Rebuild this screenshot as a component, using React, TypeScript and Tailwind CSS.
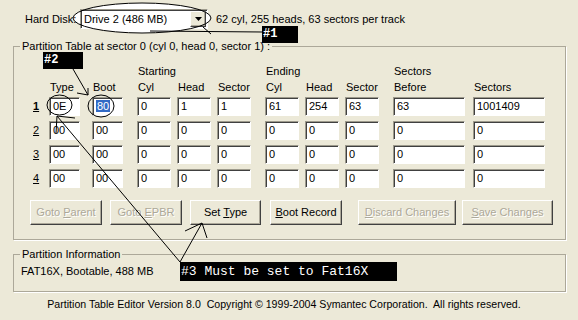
import React from 'react';

const rows = [
  ['0E', '80', '0', '1', '1', '61', '254', '63', '63', '1001409'],
  ['00', '00', '0', '0', '0', '0', '0', '0', '0', '0'],
  ['00', '00', '0', '0', '0', '0', '0', '0', '0', '0'],
  ['00', '00', '0', '0', '0', '0', '0', '0', '0', '0'],
];

const cols = [
  'w-[31px]',
  'ml-[12px] w-[31px]',
  'ml-[14px] w-[34px]',
  'ml-[6px] w-[34px]',
  'ml-[6px] w-[34px]',
  'ml-[14px] w-[34px]',
  'ml-[6px] w-[34px]',
  'ml-[6px] w-[34px]',
  'ml-[14px] w-[72px]',
  'ml-[8px] w-[72px]',
];

const groupTop = ['', '', 'Starting', '', '', 'Ending', '', '', 'Sectors', ''];
const groupSub = ['Type', 'Boot', 'Cyl', 'Head', 'Sector', 'Cyl', 'Head', 'Sector', 'Before', 'Sectors'];

const sunken =
  'border border-t-[#9d9a8c] border-l-[#9d9a8c] border-b-white border-r-white shadow-[inset_1px_1px_0_#404040]';
const raised =
  'border border-t-white border-l-white border-r-[#404040] border-b-[#404040] shadow-[inset_-1px_-1px_0_#ACA899]';

function Field({ value, selected, cls }: { value: string; selected?: boolean; cls: string }) {
  return (
    <div className={`${cls} ${sunken} h-[19px] bg-white pl-[3px] leading-[17px]`}>
      {selected ? <span className="bg-[#316AC5] px-[1px] text-white">{value}</span> : value}
    </div>
  );
}

function Btn({ children, w, disabled }: { children: React.ReactNode; w: string; disabled?: boolean }) {
  return (
    <div
      className={`${w} ${raised} flex h-[25px] items-center justify-center ${
        disabled ? 'text-[#ACA899] [text-shadow:1px_1px_0_#fff]' : 'text-black'
      }`}
    >
      <span className="whitespace-pre">{children}</span>
    </div>
  );
}

export default function App() {
  return (
    <div className="relative h-[320px] w-[578px] overflow-hidden bg-[#ECE9D8] font-['Liberation_Sans',Arial,sans-serif] text-[11px] text-black">
      {/* white oval behind the drive picker */}
      <svg className="absolute left-0 top-0" width="578" height="320">
        <ellipse cx="142" cy="18" rx="69" ry="15" fill="#fff" />
      </svg>

      <div className="relative">
        {/* hard disk row */}
        <div className="flex items-center pt-[9px]">
          <span className="ml-[25px] w-[55px]">Hard Disk:</span>
          <div className={`${sunken} flex h-[20px] w-[128px] items-center bg-white`}>
            <span className="flex-1 pl-[3px]">Drive 2 (486 MB)</span>
            <div className={`${raised} mr-[1px] flex h-[16px] w-[16px] items-center justify-center bg-[#ECE9D8]`}>
              <svg width="7" height="4" viewBox="0 0 7 4">
                <path d="M0 0h7L3.5 4z" fill="#000" />
              </svg>
            </div>
          </div>
          <span className="ml-[8px]">62 cyl, 255 heads, 63 sectors per track</span>
        </div>

        {/* partition table group */}
        <fieldset className="ml-[13px] mt-[11px] w-[553px] border border-[#ACA899] pb-[14px] pt-[10px] shadow-[1px_1px_0_#fff]">
          <legend className="ml-[6px] px-[2px] leading-[13px]">
            Partition Table at sector 0 (cyl 0, head 0, sector 1) :
          </legend>
          <div className="pl-[35px]">
            <div className="flex h-[16px] items-center">
              {groupTop.map((t, i) => (
                <div key={i} className={`${cols[i]} whitespace-nowrap pl-[1px]`}>
                  {t}
                </div>
              ))}
            </div>
            <div className="flex h-[16px] items-center">
              {groupSub.map((t, i) => (
                <div key={i} className={`${cols[i]} whitespace-nowrap pl-[1px]`}>
                  {t}
                </div>
              ))}
            </div>
          </div>

          <div className="mt-[2px] flex flex-col gap-[5px]">
            {rows.map((r, ri) => (
              <div key={ri} className="flex items-center">
                <span className={`ml-[19px] w-[16px] underline ${ri === 0 ? 'font-bold' : ''}`}>{ri + 1}</span>
                {r.map((v, ci) => (
                  <Field key={ci} value={v} cls={cols[ci]} selected={ri === 0 && ci === 1} />
                ))}
              </div>
            ))}
          </div>

          <div className="mt-[12px] flex">
            <div className="ml-[16px]">
              <Btn w="w-[72px]" disabled>
                Goto <u>P</u>arent
              </Btn>
            </div>
            <div className="ml-[8px]">
              <Btn w="w-[72px]" disabled>
                Goto <u>E</u>PBR
              </Btn>
            </div>
            <div className="ml-[8px]">
              <Btn w="w-[71px]">
                Set <u>T</u>ype
              </Btn>
            </div>
            <div className="ml-[9px]">
              <Btn w="w-[72px]">
                <u>B</u>oot Record
              </Btn>
            </div>
            <div className="ml-[16px]">
              <Btn w="w-[98px]" disabled>
                <u>D</u>iscard Changes
              </Btn>
            </div>
            <div className="ml-[6px]">
              <Btn w="w-[91px]" disabled>
                <u>S</u>ave Changes
              </Btn>
            </div>
          </div>
        </fieldset>

        {/* partition information group */}
        <fieldset className="ml-[13px] mt-[8px] w-[553px] border border-[#ACA899] pb-[12px] pt-[2px] shadow-[1px_1px_0_#fff]">
          <legend className="ml-[6px] px-[2px] leading-[13px]">Partition Information</legend>
          <div className="pl-[7px] leading-[16px]">FAT16X, Bootable, 488 MB</div>
        </fieldset>

        <div className="mt-[4px] whitespace-pre pr-[10px] text-center text-[10.6px] leading-[16px]">
          Partition Table Editor Version 8.0  Copyright © 1999-2004 Symantec Corporation.  All rights reserved.
        </div>
      </div>

      {/* annotations drawn on top of the dialog */}
      <svg className="pointer-events-none absolute left-0 top-0" width="578" height="320" fill="none" stroke="#000" strokeWidth="1">
        <ellipse cx="142" cy="18" rx="69" ry="15" />
        <path d="M150 31L262 32M203 27L211 34" />
        <ellipse cx="59.5" cy="105" rx="12.5" ry="10" />
        <ellipse cx="101" cy="106" rx="13" ry="11" />
        <path d="M73 69L88 95M88 95L77 93M88 95L88 88" />
        <path d="M57 116L180 262M57 116L75 118M57 116L56 133" />
        <path d="M180 262L202 223M202 223L185 231M202 223L207 238" />
      </svg>

      <div className="absolute left-[262px] top-[26px] h-[17px] w-[36px] bg-black pl-[1px] font-['Liberation_Mono',monospace] text-[12px] font-bold leading-[17px] text-white">
        #1
      </div>
      <div className="absolute left-[43px] top-[52px] h-[17px] w-[40px] bg-black pl-[1px] font-['Liberation_Mono',monospace] text-[12px] font-bold leading-[17px] text-white">
        #2
      </div>
      <div className="absolute left-[180px] top-[262px] h-[19px] w-[217px] whitespace-pre bg-black pl-[1px] font-['Liberation_Mono',monospace] text-[13px] leading-[19px] text-white">
        #3 Must be set to Fat16X
      </div>
    </div>
  );
}
